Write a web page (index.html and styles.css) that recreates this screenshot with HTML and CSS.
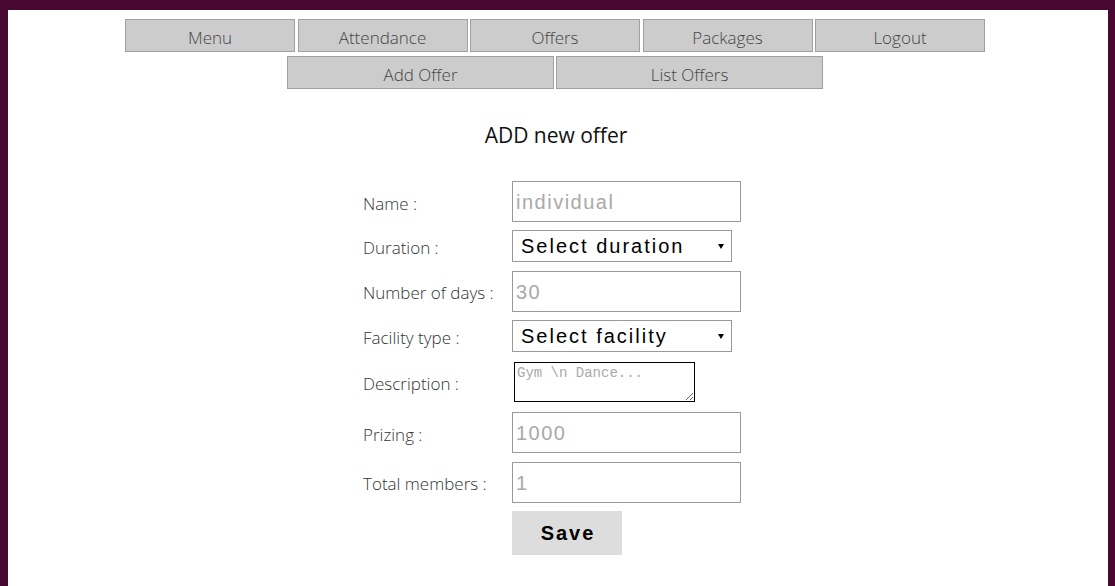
FILE: index.html
```html
<!DOCTYPE html>
<html>
<head>
<meta charset="utf-8">
<title>Add Offer</title>
<link rel="stylesheet" href="styles.css">
</head>
<body>
<div class="page">
  <nav class="nav">
    <div class="nav-row">
      <a class="nav-btn">Menu</a>
      <a class="nav-btn">Attendance</a>
      <a class="nav-btn">Offers</a>
      <a class="nav-btn">Packages</a>
      <a class="nav-btn">Logout</a>
    </div>
    <div class="nav-row sub">
      <a class="nav-btn wide">Add Offer</a>
      <a class="nav-btn wide">List Offers</a>
    </div>
  </nav>
  <h2 class="title">ADD new offer</h2>
  <div class="form-wrap">
    <form class="form">
      <label class="lbl">Name :</label>
      <input class="inp" type="text" placeholder="individual">
      <label class="lbl">Duration :</label>
      <div class="sel"><span>Select duration</span><i class="arrow"></i></div>
      <label class="lbl">Number of days :</label>
      <input class="inp" type="text" placeholder="30">
      <label class="lbl">Facility type :</label>
      <div class="sel"><span>Select facility</span><i class="arrow"></i></div>
      <label class="lbl">Description :</label>
      <textarea class="ta" placeholder="Gym \n Dance..."></textarea>
      <label class="lbl">Prizing :</label>
      <input class="inp" type="text" placeholder="1000">
      <label class="lbl">Total members :</label>
      <input class="inp" type="text" placeholder="1">
      <span></span>
      <button class="save" type="button">Save</button>
    </form>
  </div>
</div>
</body>
</html>
```

FILE: styles.css
```css
html {
  background: #480832;
  height: 100%;
}
body {
  margin: 10px 7px 0 8px;
  min-height: calc(100% - 10px);
  background: #ffffff;
  font-family: "Open Sans", "Noto Sans", sans-serif;
}
.page {
  padding-top: 9px;
}
.nav {
  display: flex;
  flex-direction: column;
  align-items: center;
  gap: 4px;
  padding-right: 6px;
}
.nav-row {
  display: flex;
  gap: 2.5px;
}
.nav-row.sub {
  gap: 2px;
}
.nav-btn {
  box-sizing: border-box;
  width: 170px;
  height: 33px;
  background: #cccccc;
  border: 1px solid #a0a0a0;
  color: #444;
  font-size: 17px;
  font-weight: 300;
  display: flex;
  align-items: center;
  justify-content: center;
  padding-top: 4px;
}
.nav-btn.wide {
  width: 267px;
}
.title {
  margin: 26px 0 0;
  padding-right: 4px;
  text-align: center;
  font-size: 21px;
  font-weight: 400;
  color: #111;
  line-height: 40px;
}
.form-wrap {
  display: flex;
  justify-content: center;
  padding-right: 12px;
  margin-top: 26px;
}
.form {
  display: grid;
  grid-template-columns: 149px 229px;
  row-gap: 8.3px;
  align-items: center;
}
.lbl {
  font-size: 17px;
  font-weight: 300;
  color: #333;
  padding-top: 3px;
}
.inp {
  box-sizing: border-box;
  width: 229px;
  height: 41px;
  margin: 0;
  border: 1px solid #999;
  padding: 2px 3px 0;
  font-family: "Liberation Sans", Arial, sans-serif;
  font-size: 20px;
  letter-spacing: 1.5px;
  color: #222;
  outline: none;
}
.inp::placeholder {
  color: #a9a9a9;
}
.sel {
  box-sizing: border-box;
  width: 220px;
  height: 32px;
  border: 1px solid #999;
  display: flex;
  align-items: center;
  justify-content: space-between;
  padding: 1px 7px 0 8px;
  font-family: "Liberation Sans", Arial, sans-serif;
  font-size: 20px;
  letter-spacing: 2px;
  color: #000;
}
.arrow {
  width: 0;
  height: 0;
  border-left: 3px solid transparent;
  border-right: 3px solid transparent;
  border-top: 5px solid #000;
}
.ta {
  box-sizing: border-box;
  width: 181px;
  height: 40px;
  margin: 2px 0 2px 2px;
  border: 1px solid #000;
  padding: 2px;
  font-family: "Liberation Mono", "Courier New", monospace;
  font-size: 14px;
  resize: both;
}
.ta::placeholder {
  color: #a9a9a9;
}
.save {
  box-sizing: border-box;
  width: 110px;
  height: 44px;
  margin: 0;
  border: none;
  background: #dddddd;
  font-family: "Liberation Sans", Arial, sans-serif;
  font-weight: bold;
  font-size: 20px;
  letter-spacing: 2px;
  color: #000;
  padding: 0 0 0 2px;
}
```
